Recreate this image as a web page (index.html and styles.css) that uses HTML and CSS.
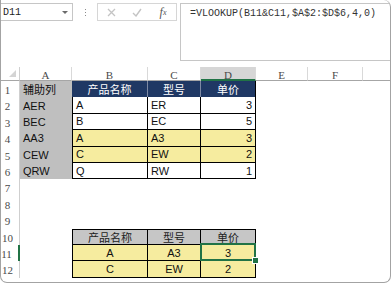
FILE: index.html
```html
<!DOCTYPE html>
<html>
  <head>
    <meta charset="utf-8" />
    <title>VLOOKUP</title>
    <link rel="stylesheet" href="styles.css">
  </head>
  <body>
    <div class="window">
      <div class="formula-bar">
        <div class="name-box">
          <span>D11</span>
          <span class="caret"></span>
        </div>
        <div class="grip"><i></i><i></i><i></i></div>
        <div class="fx-box">
          <span class="fx-btn">
            <svg width="9" height="9" viewBox="0 0 9 9"><path d="M1 1L8 8M8 1L1 8" stroke="#c4c4c4" stroke-width="1.3" fill="none"/></svg>
          </span>
          <span class="fx-btn">
            <svg width="10" height="9" viewBox="0 0 10 9"><path d="M1 5L4 8L9 1" stroke="#c4c4c4" stroke-width="1.4" fill="none"/></svg>
          </span>
          <span class="fx-btn fx-label">f<sub>x</sub></span>
        </div>
        <div class="formula">=VLOOKUP(B11&amp;C11,$A$2:$D$6,4,0)</div>
      </div>

      <div class="sheet">
        <div class="row col-heads">
          <div class="rh corner"><span class="corner-mark"></span></div>
          <div class="ch ca">A</div>
          <div class="ch cb">B</div>
          <div class="ch cc">C</div>
          <div class="ch cd active">D</div>
          <div class="ch ce">E</div>
          <div class="ch cf">F</div>
          <div class="ch cg"></div>
        </div>

        <div class="row">
          <div class="rh">1</div>
          <div class="cell ca helper">辅助列</div>
          <div class="cell cb head">产品名称</div>
          <div class="cell cc head">型号</div>
          <div class="cell cd head last">单价</div>
        </div>
        <div class="row">
          <div class="rh">2</div>
          <div class="cell ca helper">AER</div>
          <div class="cell cb body first">A</div>
          <div class="cell cc body">ER</div>
          <div class="cell cd body num">3</div>
        </div>
        <div class="row">
          <div class="rh">3</div>
          <div class="cell ca helper">BEC</div>
          <div class="cell cb body first">B</div>
          <div class="cell cc body">EC</div>
          <div class="cell cd body num">5</div>
        </div>
        <div class="row">
          <div class="rh">4</div>
          <div class="cell ca helper">AA3</div>
          <div class="cell cb body first yellow">A</div>
          <div class="cell cc body yellow">A3</div>
          <div class="cell cd body num yellow">3</div>
        </div>
        <div class="row">
          <div class="rh">5</div>
          <div class="cell ca helper">CEW</div>
          <div class="cell cb body first yellow">C</div>
          <div class="cell cc body yellow">EW</div>
          <div class="cell cd body num yellow">2</div>
        </div>
        <div class="row">
          <div class="rh">6</div>
          <div class="cell ca helper">QRW</div>
          <div class="cell cb body first">Q</div>
          <div class="cell cc body">RW</div>
          <div class="cell cd body num">1</div>
        </div>
        <div class="row"><div class="rh">7</div></div>
        <div class="row"><div class="rh">8</div></div>
        <div class="row"><div class="rh">9</div></div>
        <div class="row">
          <div class="rh">10</div>
          <div class="cell ca"></div>
          <div class="cell cb body first top sub-head">产品名称</div>
          <div class="cell cc body top sub-head">型号</div>
          <div class="cell cd body top sub-head">单价</div>
        </div>
        <div class="row">
          <div class="rh rh-active">11</div>
          <div class="cell ca"></div>
          <div class="cell cb body first yellow mid">A</div>
          <div class="cell cc body yellow mid">A3</div>
          <div class="cell cd body yellow mid selected">3</div>
        </div>
        <div class="row">
          <div class="rh">12</div>
          <div class="cell ca"></div>
          <div class="cell cb body first yellow mid">C</div>
          <div class="cell cc body yellow mid">EW</div>
          <div class="cell cd body yellow mid">2</div>
        </div>
      </div>
    </div>
  </body>
</html>
```

FILE: styles.css
```css
:root {
  --grid-line: #d9d9d9;
  --head-line: #a6a6a6;
  --excel-green: #217346;
  --navy: #1f3864;
  --helper-gray: #bfbfbf;
  --yellow: #f6ec9f;
  --label: #4a4a4a;
}

body {
  width: 392px;
  height: 283px;
  margin: 0;
  overflow: hidden;
  background: #fff;
  font-family: "Liberation Sans", "Noto Sans CJK SC", sans-serif;
  font-size: 11px;
  color: #111;
}

.window {
  width: 391px;
  height: 283px;
  box-sizing: border-box;
  border: 1px solid #a3a3a3;
  border-top: 0;
  border-radius: 0 7px 7px 7px;
  overflow: hidden;
}

/* formula bar */

.formula-bar {
  display: flex;
  align-items: flex-start;
  height: 61px;
  padding-top: 3px;
  box-sizing: border-box;
}

.name-box {
  display: flex;
  align-items: center;
  justify-content: space-between;
  width: 72px;
  height: 18px;
  box-sizing: border-box;
  padding: 0 4px 0 2px;
  border: 1px solid #c6c6c6;
  border-left: 0;
  font-family: "Liberation Mono", monospace;
  font-size: 10px;
  color: #222;
}

.caret {
  width: 0;
  height: 0;
  border-left: 3px solid transparent;
  border-right: 3px solid transparent;
  border-top: 3px solid #6b6b6b;
}

.grip {
  display: flex;
  flex-direction: column;
  align-items: center;
  gap: 2px;
  width: 24px;
  padding-top: 6px;
}

.grip i {
  width: 1px;
  height: 1px;
  background: #8c8c8c;
}

.fx-box {
  display: flex;
  align-items: center;
  width: 80px;
  height: 18px;
  box-sizing: border-box;
  border: 1px solid #d6d6d6;
}

.fx-btn {
  display: flex;
  align-items: center;
  justify-content: center;
  width: 26px;
}

.fx-label {
  font-family: "Liberation Serif", serif;
  font-style: italic;
  font-size: 12px;
  color: #555;
}

.fx-label sub {
  font-size: 8px;
  vertical-align: -1px;
}

.formula {
  flex: 1;
  height: 58px;
  box-sizing: border-box;
  margin-left: 3px;
  padding: 4px 0 0 9px;
  border: 1px solid #c6c6c6;
  border-right: 0;
  font-family: "Liberation Mono", monospace;
  font-size: 10px;
  line-height: 12px;
  color: #333;
  white-space: nowrap;
}

/* sheet */

.sheet {
  margin-top: 6px;
}

.row {
  display: flex;
  height: 16.4px;
}

.col-heads {
  height: 14px;
}

.rh {
  flex: none;
  width: 19px;
  box-sizing: border-box;
  padding: 2px 5px 0 0;
  border-right: 1px solid #cfcfcf;
  text-align: center;
  font-family: "Liberation Serif", serif;
  font-size: 11px;
  line-height: 14px;
  color: var(--label);
}

.rh-active {
  border-right: 2px solid var(--excel-green);
  padding-right: 6px;
}

.corner {
  position: relative;
  padding: 0;
  border-bottom: 1px solid var(--head-line);
}

.corner-mark {
  position: absolute;
  right: 3px;
  bottom: 3px;
  width: 0;
  height: 0;
  border-left: 7px solid transparent;
  border-bottom: 7px solid #d4d4d4;
}

.ch {
  flex: none;
  box-sizing: border-box;
  padding-top: 3px;
  border-right: 1px solid var(--grid-line);
  border-bottom: 1px solid var(--head-line);
  text-align: center;
  font-family: "Liberation Serif", serif;
  font-size: 11px;
  line-height: 10px;
  color: var(--label);
}

.ch.active {
  background: #d6d6d6;
  border-bottom: 2px solid var(--excel-green);
}

.ca { width: 52px; }
.cb { width: 76px; }
.cc { width: 53px; }
.cd { width: 55px; }
.ce { width: 52px; }
.cf { width: 55px; }
.cg { flex: 1; border-right: 0; }

.cell {
  flex: none;
  display: flex;
  align-items: center;
  box-sizing: border-box;
  padding: 0 3px;
  white-space: nowrap;
  overflow: hidden;
}

.helper {
  background: var(--helper-gray);
  color: #111;
}

.head {
  justify-content: center;
  background: var(--navy);
  color: #fff;
  border-right: 1px solid #7d89a3;
}

.head.last {
  border-right: 1px solid #000;
}

.body {
  border-right: 1px solid #000;
  border-bottom: 1px solid #000;
}

.body.first {
  border-left: 1px solid #000;
}

.body.top {
  border-top: 1px solid #000;
}

.num {
  justify-content: flex-end;
}

.yellow {
  background: var(--yellow);
}

.sub-head {
  justify-content: center;
  background: #c6c6c6;
  color: #222;
}

.mid {
  justify-content: center;
}

.selected {
  position: relative;
  overflow: visible;
}

.selected::after {
  content: "";
  position: absolute;
  left: -1px;
  top: -2px;
  right: -1px;
  bottom: -1px;
  border: 2px solid var(--excel-green);
}

.selected::before {
  content: "";
  position: absolute;
  right: -4px;
  bottom: -4px;
  width: 5px;
  height: 5px;
  background: var(--excel-green);
  border: 1px solid #fff;
  z-index: 1;
}
```
